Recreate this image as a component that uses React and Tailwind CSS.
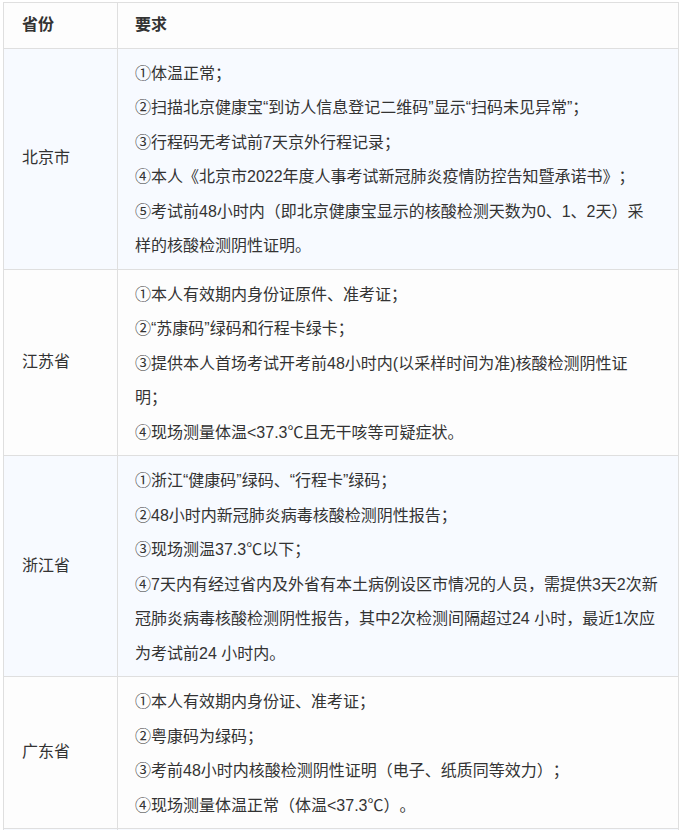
import React from "react";

const rows = [
  {
    p: "北京市",
    bg: "bg-[#f7faff]",
    items: [
      "①体温正常；",
      "②扫描北京健康宝\u201c到访人信息登记二维码\u201d显示\u201c扫码未见异常\u201d；",
      "③行程码无考试前7天京外行程记录；",
      "④本人《北京市2022年度人事考试新冠肺炎疫情防控告知暨承诺书》；",
      "⑤考试前48小时内（即北京健康宝显示的核酸检测天数为0、1、2天）采|样的核酸检测阴性证明。",
    ],
  },
  {
    p: "江苏省",
    bg: "bg-[#fdfdfd]",
    items: [
      "①本人有效期内身份证原件、准考证；",
      "②\u201c苏康码\u201d绿码和行程卡绿卡；",
      "③提供本人首场考试开考前48小时内(以采样时间为准)核酸检测阴性证|明；",
      "④现场测量体温<37.3℃且无干咳等可疑症状。",
    ],
  },
  {
    p: "浙江省",
    bg: "bg-[#f7faff]",
    items: [
      "①浙江\u201c健康码\u201d绿码、\u201c行程卡\u201d绿码；",
      "②48小时内新冠肺炎病毒核酸检测阴性报告；",
      "③现场测温37.3℃以下；",
      "④7天内有经过省内及外省有本土病例设区市情况的人员，需提供3天2次新冠肺炎病毒核酸检测阴性报告，其中2次检测间隔超过24 小时，最近1次应为考试前24 小时内。",
    ],
  },
  {
    p: "广东省",
    bg: "bg-[#fdfdfd]",
    items: [
      "①本人有效期内身份证、准考证；",
      "②粤康码为绿码；",
      "③考前48小时内核酸检测阴性证明（电子、纸质同等效力）；",
      "④现场测量体温正常（体温<37.3℃）。",
    ],
  },
];

function Item({ text }) {
  const parts = text.split("|");
  return (
    <p>
      {parts.map((s, i) => (
        <React.Fragment key={i}>
          {i > 0 && <br />}
          {s}
        </React.Fragment>
      ))}
    </p>
  );
}

export default function App() {
  return (
    <div
      className="bg-white pl-[3px] pt-[2px] text-[16px] text-[#333333] [text-spacing-trim:space-all]"
      style={{ fontFamily: '"Liberation Sans", "Noto Sans CJK SC", sans-serif' }}
    >
      <table className="w-[676px] border-collapse">
        <thead>
          <tr className="bg-[#fdfdfd]">
            <th className="w-[114px] border border-[#dfdfdf] px-[18px] pt-[5px] pb-[5px] text-left font-bold leading-[34.5px]">
              省份
            </th>
            <th className="border border-[#dfdfdf] px-[17px] pt-[5px] pb-[5px] text-left font-bold leading-[34.5px]">
              要求
            </th>
          </tr>
        </thead>
        <tbody>
          {rows.map((r) => (
            <tr key={r.p} className={r.bg}>
              <td className="border border-[#dfdfdf] px-[18px] align-middle leading-[34.5px]">
                {r.p}
              </td>
              <td className="border border-[#dfdfdf] px-[17px] pt-[8px] pb-[5px] align-top leading-[34.5px]">
                {r.items.map((t, i) => (
                  <Item key={i} text={t} />
                ))}
              </td>
            </tr>
          ))}
          <tr className="bg-[#f7faff]">
            <td className="h-[40px] border border-[#dfdfdf]"></td>
            <td className="border border-[#dfdfdf]"></td>
          </tr>
        </tbody>
      </table>
    </div>
  );
}
